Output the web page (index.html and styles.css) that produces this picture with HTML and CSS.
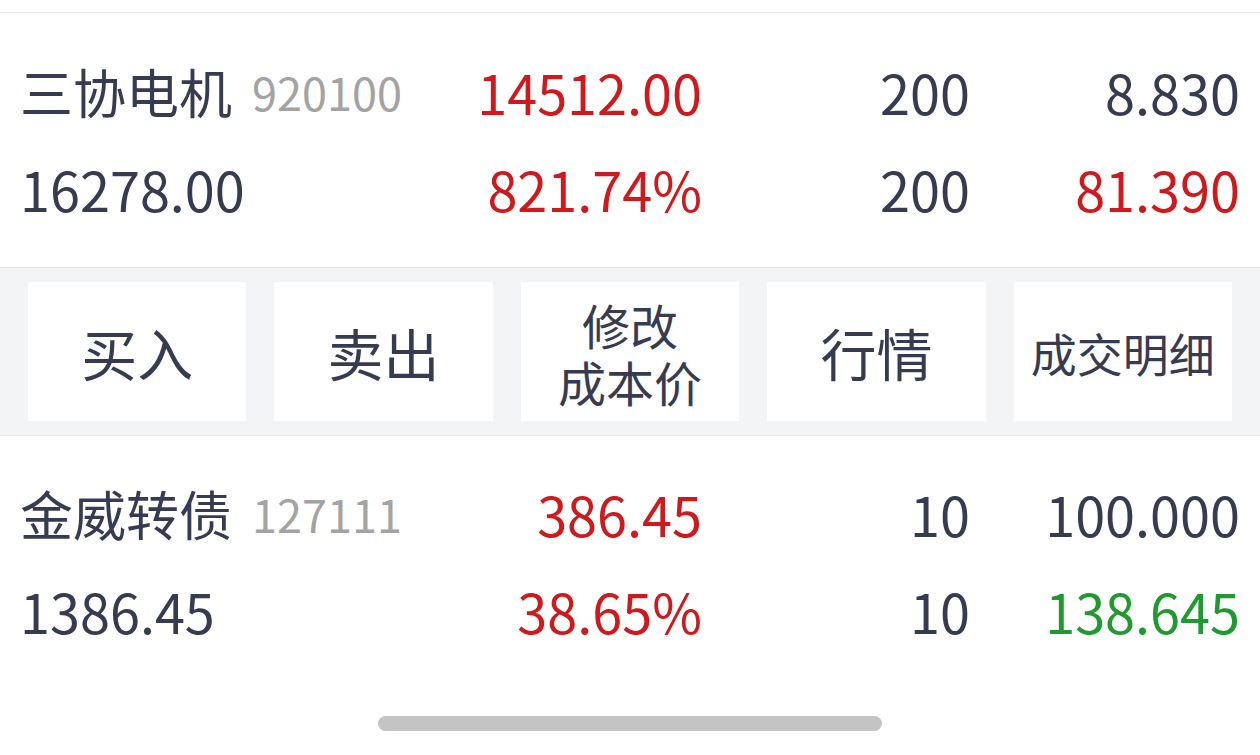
FILE: index.html
```html
<!DOCTYPE html>
<html lang="zh-CN">
<head>
<meta charset="utf-8">
<link rel="stylesheet" href="styles.css">
</head>
<body>
<div class="page">
  <div class="topline"></div>

  <section class="position">
    <div class="row">
      <div class="c1"><span class="name">三协电机</span><span class="code">920100</span></div>
      <div class="c2 up">14512.00</div>
      <div class="c3">200</div>
      <div class="c4">8.830</div>
    </div>
    <div class="row">
      <div class="c1 num">16278.00</div>
      <div class="c2 up">821.74%</div>
      <div class="c3">200</div>
      <div class="c4 up">81.390</div>
    </div>
  </section>

  <nav class="actions">
    <div class="btn big">买入</div>
    <div class="btn big">卖出</div>
    <div class="btn two"><span>修改</span><span>成本价</span></div>
    <div class="btn big">行情</div>
    <div class="btn small">成交明细</div>
  </nav>

  <section class="position second">
    <div class="row">
      <div class="c1"><span class="name">金威转债</span><span class="code">127111</span></div>
      <div class="c2 up">386.45</div>
      <div class="c3">10</div>
      <div class="c4">100.000</div>
    </div>
    <div class="row">
      <div class="c1 num">1386.45</div>
      <div class="c2 up">38.65%</div>
      <div class="c3">10</div>
      <div class="c4 down">138.645</div>
    </div>
  </section>

  <div class="home"><div class="homebar"></div></div>
</div>
</body>
</html>
```

FILE: styles.css
```css
* { box-sizing: border-box; }
html, body {
  margin: 0;
  padding: 0;
  background: #ffffff;
}
body {
  font-family: "Noto Sans CJK SC", "Noto Sans", sans-serif;
  color: #363b52;
  width: 1260px;
  height: 755px;
  overflow: hidden;
}
.topline {
  height: 13px;
  border-bottom: 1px solid #e6e7e9;
}
.position {
  padding: 30px 20px 30px 20px;
}
.position.second {
  padding-top: 29px;
  padding-bottom: 30px;
}
.row {
  display: grid;
  grid-template-columns: minmax(0, 1fr) 330px 268px 270px;
  align-items: center;
  height: 97px;
  font-size: 54px;
  line-height: 1;
}
.c1 {
  display: flex;
  align-items: center;
  white-space: nowrap;
}
.c2, .c3, .c4 { text-align: right; white-space: nowrap; }
.name {
  font-size: 53px;
  margin-right: 20px;
}
.code {
  font-size: 45px;
  color: #a3a3a3;
}
.up { color: #d0191c; }
.down { color: #1f9a2e; }

.actions {
  display: flex;
  gap: 28px;
  padding: 14px 28px 14px 28px;
  background: #f3f4f6;
  border-top: 1px solid #e6e7e9;
  border-bottom: 1px solid #e6e7e9;
}
.btn {
  flex: 1;
  height: 139px;
  background: #ffffff;
  display: flex;
  align-items: center;
  justify-content: center;
  text-align: center;
  color: #363b52;
}
.btn.big { font-size: 56px; }
.btn.two {
  flex-direction: column;
  font-size: 48px;
  line-height: 57px;
  padding-top: 2px;
}
.btn.small { font-size: 46px; }

.home {
  display: flex;
  justify-content: center;
  padding-top: 27px;
}
.homebar {
  width: 504px;
  height: 15px;
  border-radius: 8px;
  background: #c4c4c4;
}
```
